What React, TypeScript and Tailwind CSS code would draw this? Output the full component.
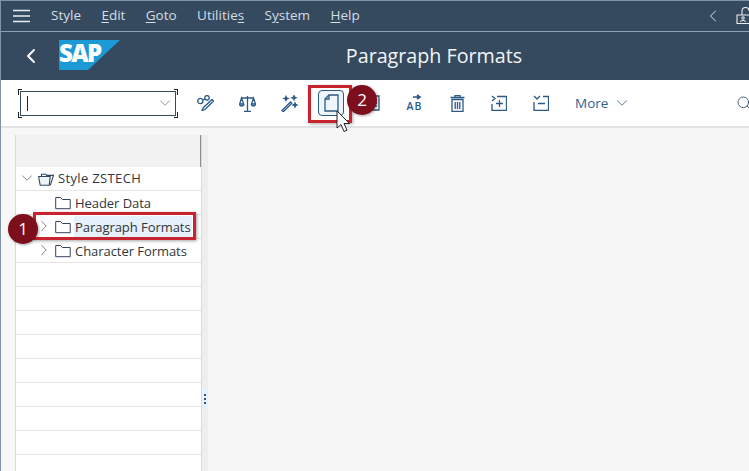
import { ChevronDown, ChevronLeft, ChevronRight, Search } from 'lucide-react';

const menus = [
  { before: 'St', u: 'y', after: 'le', plain: true },
  { before: '', u: 'E', after: 'dit' },
  { before: '', u: 'G', after: 'oto' },
  { before: 'Utilitie', u: 's', after: '' },
  { before: 'S', u: 'y', after: 'stem' },
  { before: '', u: 'H', after: 'elp' },
];

const iconProps = { fill: 'none', stroke: '#2b5a87', strokeWidth: 1.3 };

function Folder({ open = false }: { open?: boolean }) {
  if (open) {
    return (
      <svg width="16" height="14" viewBox="0 0 16 14" fill="none" stroke="#32465c" strokeWidth="1.1" className="shrink-0">
        <path d="M.6 4.500h11.600l-1 8.800H2.200z" fill="#eef4fa" />
        <path d="M3.500 4.500V2.200h4.200l1 1.200h6.800l-3.300 9.900" />
      </svg>
    );
  }
  return (
    <svg width="16" height="14" viewBox="0 0 16 14" fill="none" stroke="#32465c" strokeWidth="1" className="shrink-0">
      <path d="M.7 12.700V1.500h5l1.600 2h7.900v9.200z" />
    </svg>
  );
}

function Badge({ n }: { n: number }) {
  return (
    <div className="flex h-[30px] w-[30px] items-center justify-center rounded-full bg-[#7d0f1c] text-[17px] text-white shadow-[1px_1px_3px_rgba(0,0,0,0.35)]">
      {n}
    </div>
  );
}

function TreeRow({ arrow, label, selected }: { arrow?: boolean; label: string; selected?: boolean }) {
  return (
    <div className="relative flex h-6 items-center border-b border-[#e5e5e5] pl-[39px] pt-px text-[13px] text-[#32363a]">
      {arrow && <ChevronRight size={18} strokeWidth={1} color="#4a5b6c" className="absolute left-[19px] top-[2px]" />}
      <Folder />
      <span className={`ml-[3px] px-[1px] leading-[22px] tracking-[-0.05px] ${selected ? 'bg-[#e5f0fa]' : ''}`}>{label}</span>
    </div>
  );
}

function ToolCell({ children }: { children: React.ReactNode }) {
  return <div className="flex h-[26px] w-[42px] shrink-0 items-center justify-center">{children}</div>;
}

export default function App() {
  return (
    <div className="relative flex h-[471px] w-[749px] flex-col overflow-hidden border-l border-[#7f93a8] bg-[#f7f7f7] font-['Open_Sans',sans-serif]">
      {/* shell header */}
      <div className="flex h-[32px] shrink-0 items-center border-b border-t border-b-[#8fa1b3] border-t-[#7f93a8] bg-[#354a5f] text-[13.5px] text-[#d5dde5]">
        <svg width="18" height="14" viewBox="0 0 18 14" className="ml-[12px] mr-[20px]" stroke="#e8edf2" strokeWidth="1.7">
          <path d="M0 1.500h17M0 7h17M0 12.500h17" />
        </svg>
        <div className="flex gap-[20.400px] pb-px">
          {menus.map((m) => (
            <span key={m.before + m.u + m.after}>
              {m.before}
              {m.plain ? m.u : <span className="underline underline-offset-2">{m.u}</span>}
              {m.after}
            </span>
          ))}
        </div>
        <div className="ml-auto flex items-center gap-[13px]">
          <ChevronLeft size={20} strokeWidth={1.1} color="#e8edf2" />
          <svg width="14" height="18" viewBox="0 0 14 18" fill="none" stroke="#e8edf2" strokeWidth="1.1" className="-mr-[1px]">
            <path d="M1 8h13v8.500H1zM6 8V4a3.500 3.500 0 0 1 7 0" />
            <circle cx="7" cy="11" r="1.200" />
            <path d="M4.500 15c.3-2 4.700-2 5 0" />
          </svg>
        </div>
      </div>

      {/* title bar */}
      <div className="relative flex h-[48px] shrink-0 items-center bg-[#354a5f]">
        <ChevronLeft size={24} strokeWidth={2} color="#ffffff" className="ml-[18px]" />
        <svg width="61" height="30" viewBox="0 0 61 30" className="ml-[16px] -mt-[2px]">
          <path d="M0 0h61L29 30H0z" fill="#1b9ad6" />
        </svg>
        <span className="absolute left-[58px] top-[6px] text-[24px] font-extrabold leading-[30px] tracking-[-1.6px] text-white">SAP</span>
        <span className="absolute inset-x-0 top-[10px] pl-[118px] text-center text-[19.700px] leading-[28px] text-[#f4f6f8]">Paragraph Formats</span>
      </div>

      {/* toolbar */}
      <div className="flex h-[48px] shrink-0 items-center border-b-2 border-[#dfe3e6] bg-white">
        <div className="relative ml-[19px] flex h-[25px] w-[156px] items-center border border-[#354a5f]">
          <span className="ml-[6px] h-[15px] w-px bg-[#222]" />
          <ChevronDown size={18} strokeWidth={1} color="#6a7b8c" className="ml-auto mr-[1px]" />
          <span className="absolute -left-[3px] -top-[3px] h-[6px] w-[4px] border-l border-t border-[#222]" />
          <span className="absolute -bottom-[3px] -left-[3px] h-[6px] w-[4px] border-b border-l border-[#222]" />
          <span className="absolute -right-[3px] -top-[3px] h-[6px] w-[4px] border-r border-t border-[#222]" />
          <span className="absolute -bottom-[3px] -right-[3px] h-[6px] w-[4px] border-b border-r border-[#222]" />
        </div>

        <div className="ml-[8px] flex items-center">
          <ToolCell>
            <svg width="17" height="16" viewBox="0 0 17 16" {...iconProps}>
              <circle cx="3.300" cy="6" r="2.600" />
              <circle cx="10" cy="2.800" r="2.200" />
              <path d="M5.700 5l2.300-1.200M15 4.500L6.500 12.500l-1.500 3 3-1 8.500-8.500z" />
            </svg>
          </ToolCell>
          <ToolCell>
            <svg width="17" height="17" viewBox="0 0 17 17" {...iconProps}>
              <path d="M8.500 1v15M5 16.300h7M2.500 3h12M2.500 3L.7 9h4zM14.500 3l-2 6h4z" />
              <path d="M.7 9a2 2 0 0 0 4 0M12.500 9a2 2 0 0 0 4 0" />
            </svg>
          </ToolCell>
          <ToolCell>
            <svg width="17" height="17" viewBox="0 0 17 17" {...iconProps}>
              <path d="M1 15.500l8.500-8.500 1.300 1.300-8.500 8.500z" />
              <path d="M5 1.500l.6 1.400 1.400.6-1.400.6L5 5.500l-.6-1.400L3 3.500l1.400-.6zM13 .7l.6 1.400 1.400.6-1.400.6-.6 1.400-.6-1.400-1.400-.6 1.400-.6zM14 8l.6 1.400 1.400.6-1.400.6-.6 1.400-.6-1.400-1.400-.6 1.400-.6z" />
            </svg>
          </ToolCell>
          <ToolCell>
            <div className="flex h-[26px] w-[26px] items-center justify-center rounded-[4px] border border-[#2b5a87] bg-[#eef5fb]">
              <svg width="15" height="18" viewBox="0 0 15 18" {...iconProps}>
                <path d="M5 1h9v16H1V5z" />
                <path d="M5 1v4H1" />
              </svg>
            </div>
          </ToolCell>
          <ToolCell>
            <svg width="14" height="16" viewBox="0 0 14 16" {...iconProps}>
              <path d="M1 1h12v14H1zM4 5h7M4 8h7M4 11h7" />
            </svg>
          </ToolCell>
          <ToolCell>
            <span className="relative block h-[16px] w-[15px] text-[10.500px] font-semibold leading-none text-[#2b5a87]">
              <span className="absolute -left-[1px] top-[6px]">A</span>
              <span className="absolute left-[7px] top-[6px]">B</span>
              <svg width="10" height="7" viewBox="0 0 10 7" className="absolute left-[4px] -top-[1px]" fill="none" stroke="#2b5a87" strokeWidth="1.6">
                <path d="M1 3h6M5 1l3 2-3 2" />
              </svg>
            </span>
          </ToolCell>
          <ToolCell>
            <svg width="15" height="17" viewBox="0 0 15 17" {...iconProps}>
              <path d="M.5 2.500h14M5 2.500V.7h5v1.800M2 4.500h11v12H2zM5.200 7v7M7.500 7v7M9.800 7v7" />
            </svg>
          </ToolCell>
          <ToolCell>
            <svg width="16" height="16" viewBox="0 0 16 16" {...iconProps}>
              <path d="M1 1l3 2.500L1 6M6 1.500h9.500v14H1V9M5 8.500h7M8.500 5v7" />
            </svg>
          </ToolCell>
          <ToolCell>
            <svg width="16" height="16" viewBox="0 0 16 16" {...iconProps}>
              <path d="M1 1l3 3 3-3M10 1.500h5.500v14H1V7M5 8.500h7" />
            </svg>
          </ToolCell>
        </div>

        <div className="ml-[13px] flex items-center gap-[5px] text-[13.500px] text-[#2f5f92]">
          More
          <ChevronDown size={18} strokeWidth={1.1} />
        </div>
        <Search size={16} strokeWidth={1.3} color="#354a5f" className="ml-auto -mr-[3px]" />
      </div>

      {/* content */}
      <div className="flex flex-1 pl-[14px] pt-[7px]">
        <div className="relative flex w-[187px] flex-col border-x border-[#d9d9d9] bg-white">
          <div className="h-[32px] border-r border-r-[#8a8f94] bg-[#f2f2f2]" />
          <div className="relative flex h-6 items-center border-b border-[#e5e5e5] pl-[22px] pt-px text-[13px] text-[#32363a]">
            <ChevronDown size={18} strokeWidth={1} color="#4a5b6c" className="absolute left-[2px] top-[2px]" />
            <Folder open />
            <span className="ml-[4px] tracking-[0.35px]">Style ZSTECH</span>
          </div>
          <TreeRow label="Header Data" />
          <TreeRow arrow label="Paragraph Formats" selected />
          <TreeRow arrow label="Character Formats" />
          {Array.from({ length: 9 }).map((_, i) => (
            <div key={i} className="h-6 shrink-0 border-b border-[#e5e5e5]" />
          ))}
        </div>
        <div className="relative w-[6px] bg-[#eeeeee]">
          <div className="absolute left-0 top-[253px] flex h-[22px] w-[6px] flex-col items-center justify-center gap-[2px] bg-[#e9f2fa]">
            <span className="h-[2px] w-[2px] bg-[#2b5a87]" />
            <span className="h-[2px] w-[2px] bg-[#2b5a87]" />
            <span className="h-[2px] w-[2px] bg-[#2b5a87]" />
          </div>
        </div>
      </div>

      {/* callouts drawn over the screen */}
      <div className="absolute left-[32px] top-[212px] h-[28px] w-[163px] border-[3px] border-[#c8242f] shadow-[1px_1px_3px_rgba(0,0,0,0.35)]" />
      <div className="absolute left-[7px] top-[214px]"><Badge n={1} /></div>
      <div className="absolute left-[307px] top-[85px] h-[38px] w-[44px] border-[3px] border-[#c8242f] shadow-[1px_1px_3px_rgba(0,0,0,0.35)]" />
      <div className="absolute left-[346px] top-[85px]"><Badge n={2} /></div>
      <svg width="16" height="24" viewBox="0 0 16 24" className="absolute left-[335px] top-[110px]" fill="#ffffff" stroke="#222" strokeWidth="1">
        <path d="M1 1v17l4-3.500 3 7 3-1.300-3-6.700h5.500z" />
      </svg>
    </div>
  );
}
